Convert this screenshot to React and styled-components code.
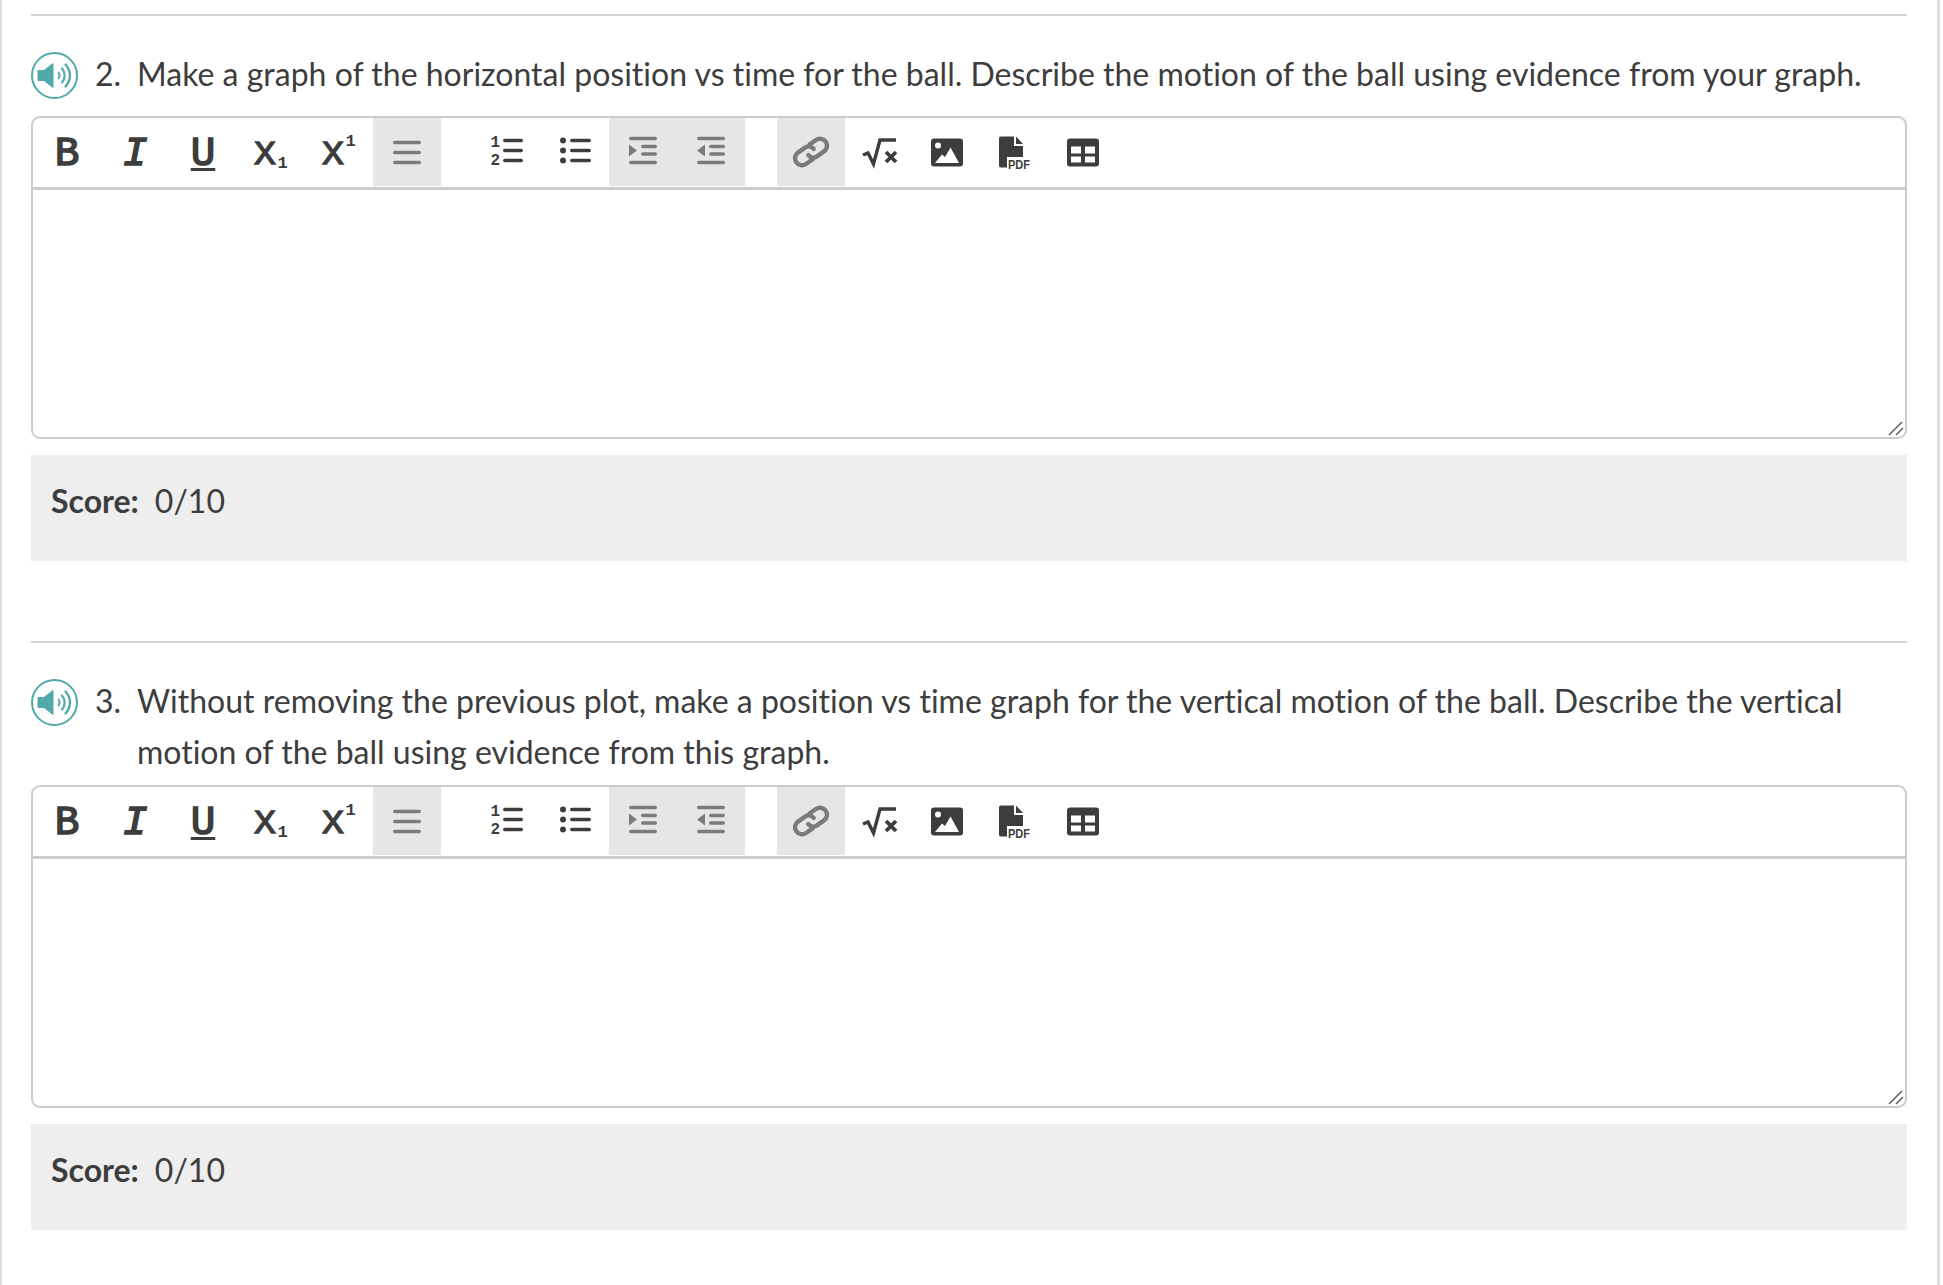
import React from 'react';
import styled, { createGlobalStyle } from 'styled-components';

const GlobalStyle = createGlobalStyle`
  html, body {
    margin: 0;
    padding: 0;
    background: #fff;
  }
  body {
    font-family: Lato, "Open Sans", sans-serif;
    font-variant-ligatures: none;
    color: #3d3d3d;
  }
`;

const Page = styled.div`
  box-sizing: border-box;
  width: 1940px;
  height: 1285px;
  overflow: hidden;
  padding: 14px 30px 0 29px;
  border-left: 2px solid #ddd;
  border-right: 3px solid #ddd;
`;

const Question = styled.section`
  border-top: 2px solid #d5d5d5;
  padding-top: 36px;
  margin-bottom: 80px;
`;

const Prompt = styled.div`
  display: flex;
  align-items: flex-start;
  min-height: 56px;
  margin-bottom: 8px;
`;

const Speaker = styled.button`
  flex: none;
  width: 48px;
  height: 48px;
  padding: 0;
  margin-right: 16px;
  border: none;
  background: none;
  display: block;
`;

const Num = styled.span`
  flex: none;
  width: 42px;
  margin-top: -4px;
  font-size: 32px;
  line-height: 51px;
`;

const PromptText = styled.p`
  margin: -4px 0 0;
  font-size: 32.03px;
  line-height: 51px;
`;

const Editor = styled.div`
  position: relative;
  border: 2px solid #ccc;
  border-radius: 9px;
  background: #fff;
`;

const Toolbar = styled.div`
  display: flex;
  gap: 32px;
  height: 69px;
  border-bottom: 3px solid #ccc;
`;

const Group = styled.div`
  display: flex;
  height: 68px;
`;

const ToolButton = styled.button`
  width: 68px;
  height: 68px;
  padding: 0;
  border: none;
  display: flex;
  align-items: center;
  justify-content: center;
  background: ${p => (p.$off ? '#e6e6e6' : 'transparent')};
  color: ${p => (p.$off ? '#7b7b7b' : '#3d3d3d')};
`;

const Slab = styled.span`
  font-family: "Liberation Mono", monospace;
  font-weight: 400;
  font-size: 41px;
  line-height: 1;
  -webkit-text-stroke: 1.6px #3d3d3d;
  position: relative;
  top: 2px;
  font-style: ${p => (p.$italic ? 'italic' : 'normal')};
  text-decoration: ${p => (p.$under ? 'underline' : 'none')};
  text-decoration-thickness: 3px;
  text-underline-offset: 3px;
`;

const Script = styled.span`
  font-family: "Liberation Sans", sans-serif;
  font-weight: 400;
  font-size: 32px;
  line-height: 1;
  -webkit-text-stroke: 1.6px #3d3d3d;
  position: relative;
  top: 1px;
`;

const Small = styled.span`
  font-family: "Liberation Mono", monospace;
  font-weight: 700;
  font-size: 17px;
  line-height: 1;
  margin-left: 2px;
  position: relative;
  top: ${p => (p.$sup ? '-11px' : '11px')};
`;

const Body = styled.div`
  height: 247px;
`;

const Grip = styled.svg`
  position: absolute;
  right: 1px;
  bottom: 1px;
  width: 16px;
  height: 16px;
`;

const ScoreBar = styled.div`
  margin-top: 16px;
  height: 106px;
  box-sizing: border-box;
  padding: 24px 20px;
  background: #eee;
  font-size: 32px;
  line-height: 44px;
`;

const ScoreLabel = styled.b`
  font-weight: 700;
  margin-right: 16px;
`;

const Ico = ({ children }) => (
  <svg width="40" height="40" viewBox="0 0 40 40" fill="currentColor">{children}</svg>
);

const Bar = ({ x, y, w, h = 3.5 }) => <rect x={x} y={y - h / 2} width={w} height={h} rx={h / 2} />;

const SpeakerIcon = () => (
  <svg width="48" height="48" viewBox="0 0 48 48">
    <circle cx="23.5" cy="23.5" r="22.5" fill="none" stroke="#52a9aa" strokeWidth="2" />
    <path d="M7 18.5H13L22 11.5V35.5L13 28.5H7Z" fill="#52a9aa" stroke="#52a9aa" strokeWidth="1" strokeLinejoin="round" />
    <g fill="none" stroke="#52a9aa" strokeLinecap="round">
      <path d="M27.5 20.5a5 5 0 0 1 0 6" strokeWidth="1.8" />
      <path d="M31 16.5a10.5 10.5 0 0 1 0 14" strokeWidth="2.2" />
      <path d="M34.5 12.5a16 16 0 0 1 0 22" strokeWidth="2.4" />
    </g>
  </svg>
);

const Toolset = () => (
  <Toolbar>
    <Group>
      <ToolButton><Slab>B</Slab></ToolButton>
      <ToolButton><Slab $italic>I</Slab></ToolButton>
      <ToolButton><Slab $under>U</Slab></ToolButton>
      <ToolButton><Script>X</Script><Small>1</Small></ToolButton>
      <ToolButton><Script>X</Script><Small $sup>1</Small></ToolButton>
      <ToolButton $off>
        <Ico>
          <Bar x={6} y={10.5} w={28} />
          <Bar x={6} y={20.5} w={28} />
          <Bar x={6} y={30.5} w={28} />
        </Ico>
      </ToolButton>
    </Group>
    <Group>
      <ToolButton>
        <Ico>
          <text x="3.5" y="15" fontFamily="Liberation Mono" fontWeight="700" fontSize="16">1</text>
          <text x="3.5" y="33" fontFamily="Liberation Mono" fontWeight="700" fontSize="16">2</text>
          <Bar x={16} y={8.5} w={20} />
          <Bar x={16} y={18.5} w={20} />
          <Bar x={16} y={28.5} w={20} />
        </Ico>
      </ToolButton>
      <ToolButton>
        <Ico>
          <circle cx="8" cy="8.5" r="3" />
          <circle cx="8" cy="18.5" r="3" />
          <circle cx="8" cy="28.5" r="3" />
          <Bar x={15} y={8.5} w={21} />
          <Bar x={15} y={18.5} w={21} />
          <Bar x={15} y={28.5} w={21} />
        </Ico>
      </ToolButton>
      <ToolButton $off>
        <Ico>
          <Bar x={6} y={6.5} w={28} />
          <path d="M6 12.5L14 18.5L6 24.5Z" />
          <Bar x={18} y={14.5} w={16} />
          <Bar x={18} y={22} w={16} />
          <Bar x={6} y={30.5} w={28} />
        </Ico>
      </ToolButton>
      <ToolButton $off>
        <Ico>
          <Bar x={6} y={6.5} w={28} />
          <path d="M14 12.5L6 18.5L14 24.5Z" />
          <Bar x={18} y={14.5} w={16} />
          <Bar x={18} y={22} w={16} />
          <Bar x={6} y={30.5} w={28} />
        </Ico>
      </ToolButton>
    </Group>
    <Group>
      <ToolButton $off>
        <Ico>
          <g fill="none" stroke="currentColor" strokeWidth="4.4" strokeLinecap="round" transform="rotate(-35 20 20)">
            <path d="M17 27H9A7 7 0 0 1 9 13H18A6.5 6.5 0 0 1 24 19" />
            <path d="M23 13H31A7 7 0 0 1 31 27H22A6.5 6.5 0 0 1 16 21" />
          </g>
        </Ico>
      </ToolButton>
      <ToolButton>
        <Ico>
          <path d="M4 23L9 21L14.5 32L21 8H37" fill="none" stroke="currentColor" strokeWidth="3.4" />
          <path d="M27 20L37 30M37 20L27 30" fill="none" stroke="currentColor" strokeWidth="3.8" />
        </Ico>
      </ToolButton>
      <ToolButton>
        <Ico>
          <rect x="4" y="6.5" width="32" height="28" rx="3" />
          <circle cx="11" cy="13.5" r="3" fill="#fff" />
          <path d="M8 31L15 22.5L18 25L23.5 15.5L32 31Z" fill="#fff" />
        </Ico>
      </ToolButton>
      <ToolButton>
        <Ico>
          <path d="M6 4.5H19V14H28V25H12V35.5H6A2 2 0 0 1 4 33.5V6.5A2 2 0 0 1 6 4.5Z" />
          <path d="M21 4.5L28 12H21Z" />
          <text x="13" y="36.5" fontFamily="Liberation Sans" fontWeight="700" fontSize="13.5" textLength="22" lengthAdjust="spacingAndGlyphs">PDF</text>
        </Ico>
      </ToolButton>
      <ToolButton>
        <Ico>
          <rect x="4" y="6.5" width="32" height="28" rx="3" />
          <rect x="8" y="14.5" width="10" height="7" fill="#fff" />
          <rect x="22" y="14.5" width="10" height="7" fill="#fff" />
          <rect x="8" y="24.5" width="10" height="6" fill="#fff" />
          <rect x="22" y="24.5" width="10" height="6" fill="#fff" />
        </Ico>
      </ToolButton>
    </Group>
  </Toolbar>
);

const QuestionBlock = ({ num, text }) => (
  <Question>
    <Prompt>
      <Speaker aria-label="Listen"><SpeakerIcon /></Speaker>
      <Num>{num}.</Num>
      <PromptText>{text}</PromptText>
    </Prompt>
    <Editor>
      <Toolset />
      <Body />
      <Grip viewBox="0 0 16 16">
        <path d="M1 15L14 2M8 15L15 8" stroke="#666" strokeWidth="1.6" fill="none" />
      </Grip>
    </Editor>
    <ScoreBar><ScoreLabel>Score:</ScoreLabel>0/10</ScoreBar>
  </Question>
);

export default function App() {
  return (
    <Page>
      <GlobalStyle />
      <QuestionBlock num={2} text="Make a graph of the horizontal position vs time for the ball. Describe the motion of the ball using evidence from your graph." />
      <QuestionBlock num={3} text="Without removing the previous plot, make a position vs time graph for the vertical motion of the ball. Describe the vertical motion of the ball using evidence from this graph." />
    </Page>
  );
}
